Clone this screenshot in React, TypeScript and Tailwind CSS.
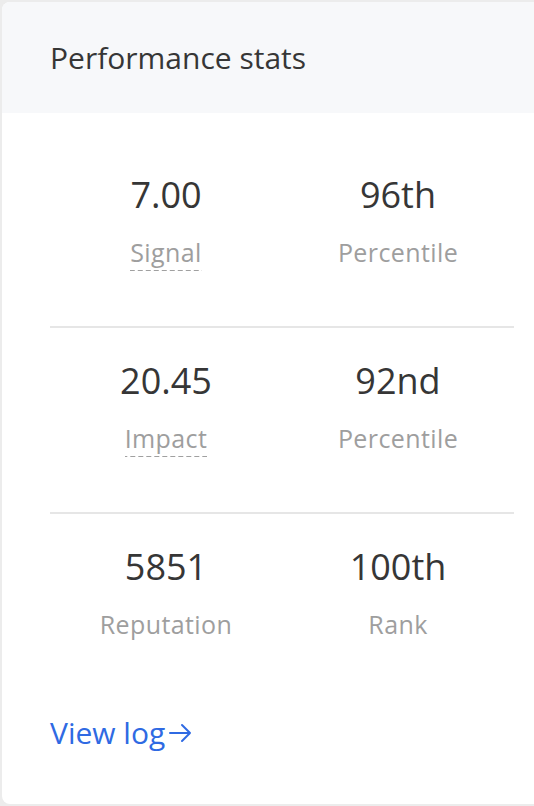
const stats = [
  [
    { value: "7.00", label: "Signal", dashed: true },
    { value: "96th", label: "Percentile" },
  ],
  [
    { value: "20.45", label: "Impact", dashed: true },
    { value: "92nd", label: "Percentile" },
  ],
  [
    { value: "5851", label: "Reputation" },
    { value: "100th", label: "Rank" },
  ],
];

export default function App() {
  return (
    <div
      className="h-[806px] w-[534px] overflow-hidden bg-[#ececec]"
      style={{ fontFamily: "'Open Sans', Lato, sans-serif" }}
    >
      <div className="ml-[2px] mt-[2px] flex h-[802px] w-[560px] flex-col overflow-hidden rounded-l-[8px] bg-white">
        <div className="flex h-[111px] items-center bg-[#f7f8fa] pl-[48px]">
          <h2 className="text-[30px] leading-none text-[#363636]">Performance stats</h2>
        </div>

        <div className="w-[512px] pl-[48px] pt-[29px]">
          {stats.map((row, i) => (
            <div
              key={i}
              className={`grid grid-cols-2 pb-[60px] pt-[35px] ${
                i < stats.length - 1 ? "border-b-2 border-[#e6e6e6]" : ""
              }`}
            >
              {row.map((s) => (
                <div key={s.value} className="flex flex-col items-center">
                  <div className="h-[36px] text-[36px] leading-[36px] text-[#363636]">
                    {s.value}
                  </div>
                  <div className="mt-[25px] h-[28px] text-[25px] leading-[28px] tracking-[0.4px] text-[#9e9e9e]">
                    <span
                      className={
                        s.dashed
                          ? "bg-[linear-gradient(to_right,#a0a0a0_60%,transparent_0)] bg-[length:8px_1.5px] bg-bottom bg-repeat-x pb-[2px]"
                          : ""
                      }
                    >
                      {s.label}
                    </span>
                  </div>
                </div>
              ))}
            </div>
          ))}

          <a
            href="#"
            className="mt-[19px] flex items-center text-[30px] leading-[32px] text-[#2f6ae3]"
          >
            View log
            <svg
              width="25"
              height="24"
              viewBox="0 0 25 24"
              fill="none"
              stroke="currentColor"
              strokeWidth="2"
              strokeLinecap="round"
              strokeLinejoin="round"
              className="ml-[3px]"
            >
              <path d="M2 12h20M14 4l8 8-8 8" />
            </svg>
          </a>
        </div>
      </div>
    </div>
  );
}
